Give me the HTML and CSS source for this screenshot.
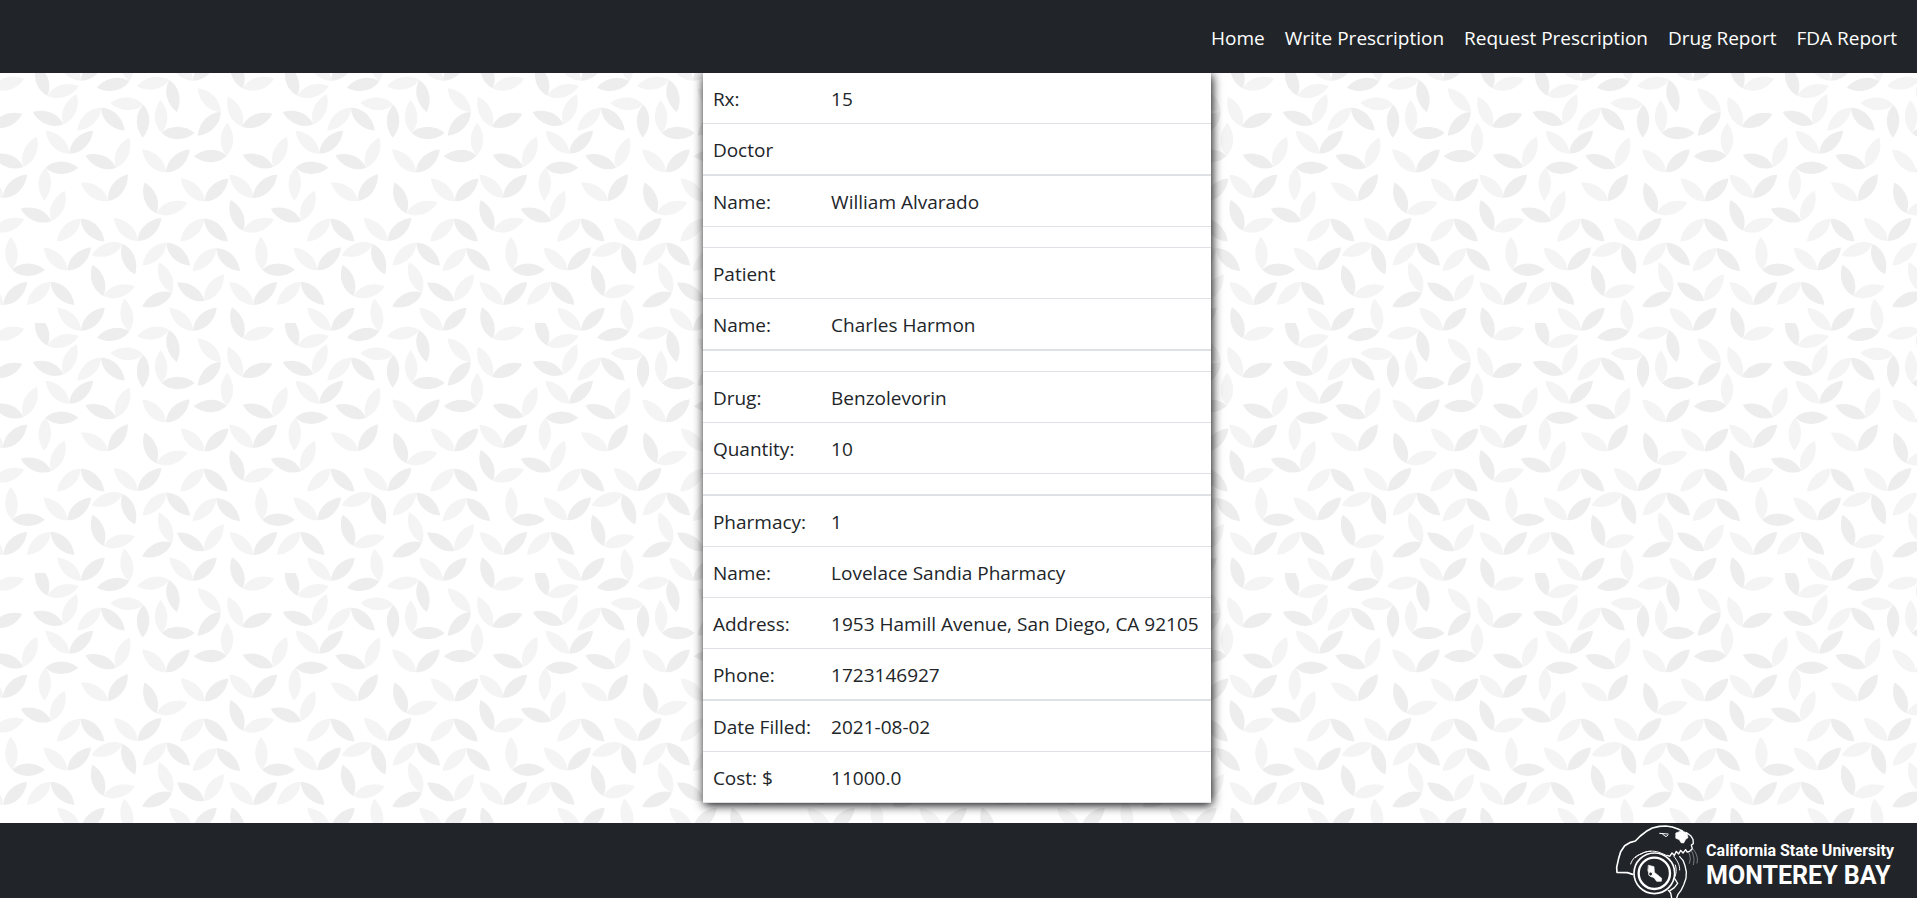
FILE: index.html
```html
<!DOCTYPE html>
<html lang="en">
<head>
<meta charset="utf-8">
<title>Prescription</title>
<link rel="stylesheet" href="styles.css">
</head>
<body>
<header class="site-header">
  <nav class="site-nav">
    <a href="#">Home</a>
    <a href="#">Write Prescription</a>
    <a href="#">Request Prescription</a>
    <a href="#">Drug Report</a>
    <a href="#">FDA Report</a>
  </nav>
</header>

<main class="content">
  <svg class="leaves" aria-hidden="true">
    <defs>
      <path id="leaf" d="M0 0C-25 -26 -25 -68 0 -99C25 -68 25 -26 0 0Z"/>
      <g id="a">
        <use href="#leaf" fill="#f4f4f4" transform="rotate(-46)"/>
        <use href="#leaf" fill="#ededed" transform="rotate(46)"/>
      </g>
      <g id="b">
        <use href="#leaf" fill="#ededed" transform="rotate(-46)"/>
        <use href="#leaf" fill="#f4f4f4" transform="rotate(46)"/>
      </g>
      <g id="tile">
        <use href="#b" transform="translate(142 107) rotate(27)"/>
        <use href="#a" transform="translate(243 812)"/>
        <use href="#b" transform="translate(388 814) rotate(-55)"/>
        <use href="#b" transform="translate(508 810) rotate(213)"/>
        <use href="#a" transform="translate(579 812)"/>
        <use href="#b" transform="translate(728 835) rotate(27)"/>
        <use href="#b" transform="translate(190 193) rotate(-22)"/>
        <use href="#b" transform="translate(303 143) rotate(180)"/>
        <use href="#b" transform="translate(430 134) rotate(227)"/>
        <use href="#a" transform="translate(485 219) rotate(44)"/>
        <use href="#b" transform="translate(662 156) rotate(270)"/>
        <use href="#a" transform="translate(726 200) rotate(21)"/>
        <use href="#a" transform="translate(208 281)"/>
        <use href="#b" transform="translate(70 321) rotate(-22)"/>
        <use href="#b" transform="translate(348 323) rotate(-22)"/>
        <use href="#a" transform="translate(498 337)"/>
        <use href="#b" transform="translate(680 287) rotate(-45)"/>
        <use href="#b" transform="translate(136 323) rotate(136)"/>
        <use href="#a" transform="translate(9 413)"/>
        <use href="#a" transform="translate(325 423) rotate(-10)"/>
        <use href="#b" transform="translate(469 460) rotate(25)"/>
        <use href="#a" transform="translate(614 424)"/>
        <use href="#b" transform="translate(154 483) rotate(-22)"/>
        <use href="#b" transform="translate(729 512) rotate(24)"/>
        <use href="#b" transform="translate(242 476) rotate(180)"/>
        <use href="#a" transform="translate(413 543)"/>
        <use href="#b" transform="translate(612 476) rotate(180)"/>
        <use href="#a" transform="translate(36 629) rotate(44)"/>
        <use href="#a" transform="translate(202 631)"/>
        <use href="#b" transform="translate(368 552) rotate(204)"/>
        <use href="#b" transform="translate(499 548) rotate(180)"/>
        <use href="#b" transform="translate(649 565) rotate(180)"/>
        <use href="#b" transform="translate(310 708) rotate(27)"/>
        <use href="#b" transform="translate(516 698) rotate(-69)"/>
        <use href="#b" transform="translate(613 723) rotate(-10)"/>
        <use href="#a" transform="translate(10 735)"/>
        <use href="#a" transform="translate(760 413)"/>
        <use href="#b" transform="translate(152 666) rotate(180)"/>
      </g>
      <pattern id="leaf-pattern" width="750" height="750" patternUnits="userSpaceOnUse" patternTransform="scale(.33333333)">
        <g transform="translate(0 -39)">
          <use href="#tile"/>
          <use href="#tile" x="750"/>
          <use href="#tile" x="-750"/>
          <use href="#tile" y="-750"/>
          <use href="#tile" x="-750" y="-750"/>
          <use href="#tile" x="750" y="-750"/>
        </g>
      </pattern>
    </defs>
    <rect width="100%" height="100%" fill="url(#leaf-pattern)"/>
  </svg>

  <table class="details">
    <tbody>
      <tr><th scope="row">Rx:</th><td>15</td></tr>
      <tr class="strong"><th scope="row">Doctor</th><td></td></tr>
      <tr><th scope="row">Name:</th><td>William Alvarado</td></tr>
      <tr class="spacer"><td colspan="2"></td></tr>
      <tr><th scope="row">Patient</th><td></td></tr>
      <tr class="strong"><th scope="row">Name:</th><td>Charles Harmon</td></tr>
      <tr class="spacer"><td colspan="2"></td></tr>
      <tr><th scope="row">Drug:</th><td>Benzolevorin</td></tr>
      <tr><th scope="row">Quantity:</th><td>10</td></tr>
      <tr class="spacer strong"><td colspan="2"></td></tr>
      <tr><th scope="row">Pharmacy:</th><td>1</td></tr>
      <tr><th scope="row">Name:</th><td>Lovelace Sandia Pharmacy</td></tr>
      <tr><th scope="row">Address:</th><td>1953 Hamill Avenue, San Diego, CA 92105</td></tr>
      <tr class="strong"><th scope="row">Phone:</th><td>1723146927</td></tr>
      <tr><th scope="row">Date Filled:</th><td>2021-08-02</td></tr>
      <tr><th scope="row">Cost: $</th><td>11000.0</td></tr>
    </tbody>
  </table>
</main>

<footer class="site-footer">
  <div class="brand">
    <svg class="otter" viewBox="72 39 258 225" fill="none" stroke="#fff" stroke-width="5" stroke-linecap="round" stroke-linejoin="round" aria-hidden="true">
      <path d="M128 193L112 188L81 187L80 172L86 145L92 125L104 107L119 98L136 93L151 78L169 64L187 54L208 49L228 48L247 51L264 57L277 63"/>
      <path d="M290 68L302 77L309 88L310 101L304 105L307 116L299 124L291 126L287 119L279 129L272 121L266 132L259 124L253 136L246 129L239 139L233 136" stroke-width="4"/>
      <path d="M258 69L275 62L291 69L294 83L287 88L281 99L273 98L268 89L258 85Z" fill="#fff" stroke-width="2"/>
      <path d="M209 70L234 72M218 73L228 80L234 75" stroke-width="3"/>
      <path d="M122 162C127 146 138 136 154 132C170 121 191 122 207 127C216 130 224 134 231 137" stroke-width="3"/>
      <path d="M136 143C151 129 169 124 182 124" stroke-width="3"/>
      <path d="M251 138C260 150 270 164 269 180M256 165C262 183 257 199 250 209" stroke-width="3"/>
      <path d="M269 140L279 151L285 167L289 186L288 205L281 225L273 241L264 253L260 264M235 241L242 249L245 264M253 204L263 220L253 233L240 242" stroke-width="4"/>
      <path d="M296 127C302 138 302 150 298 160M304 122C312 135 314 151 310 164M309 117C320 130 325 145 321 159" stroke="#aeb1b4" stroke-width="2"/>
      <circle cx="193" cy="190" r="61"/>
      <circle cx="193" cy="190" r="47" stroke-width="7"/>
      <path d="M176 166L192 170L193 187L215 205L214 214L200 214L192 203L181 199L174 183Z" fill="#fff" stroke-width="2"/>
      <circle cx="182" cy="192" r="6" fill="#212529" stroke-width="3"/>
    </svg>
    <div class="brand-text">
      <span class="brand-system">California State University</span>
      <span class="brand-campus">MONTEREY BAY</span>
    </div>
  </div>
</footer>
</body>
</html>
```
FILE: styles.css
```css
* {
  box-sizing: border-box;
}

body {
  margin: 0;
  min-height: 100vh;
  display: flex;
  flex-direction: column;
  background: #fff;
  color: #212529;
  font: 19px/30px "Segoe UI", "Open Sans", "Noto Sans", sans-serif;
}

.site-header {
  position: relative;
  z-index: 1;
  padding: 23px 20px 20px;
  background: #212529;
}

.site-nav {
  display: flex;
  flex-wrap: wrap;
  justify-content: flex-end;
  gap: 0 20px;
}

.site-nav a {
  color: #fff;
  text-decoration: none;
}

.content {
  position: relative;
  flex: 1;
  display: flex;
  justify-content: center;
  align-items: flex-start;
  padding: 0 3px 20px 0;
  overflow: hidden;
}

.leaves {
  position: absolute;
  inset: 0;
  width: 100%;
  height: 100%;
}

.details {
  position: relative;
  border-collapse: separate;
  border-spacing: 0;
  background: #fff;
  box-shadow: 1px 2px 10px #000;
}

.details th,
.details td {
  padding: 11px 10px 9px;
  border-bottom: 1px solid #dee2e6;
  font-weight: 400;
  text-align: left;
  white-space: nowrap;
}

.details th {
  width: 118px;
}

.details td {
  min-width: 390px;
}

.details .strong > * {
  border-bottom-width: 2px;
}

.details .spacer td {
  padding: 10px 0;
}

.site-footer {
  position: relative;
  z-index: 1;
  display: flex;
  justify-content: flex-end;
  padding: 0 23px;
  background: #212529;
}

.brand {
  display: flex;
  align-items: flex-start;
  gap: 6px;
  color: #fff;
  font-family: Roboto, sans-serif;
}

.otter {
  display: block;
  width: 86px;
  height: 75px;
}

.brand-text {
  display: flex;
  flex-direction: column;
  padding-top: 18px;
}

.brand-system {
  font-size: 16px;
  line-height: 20px;
  font-weight: 700;
}

.brand-campus {
  font-size: 25px;
  line-height: 30px;
  font-weight: 700;
}
```
